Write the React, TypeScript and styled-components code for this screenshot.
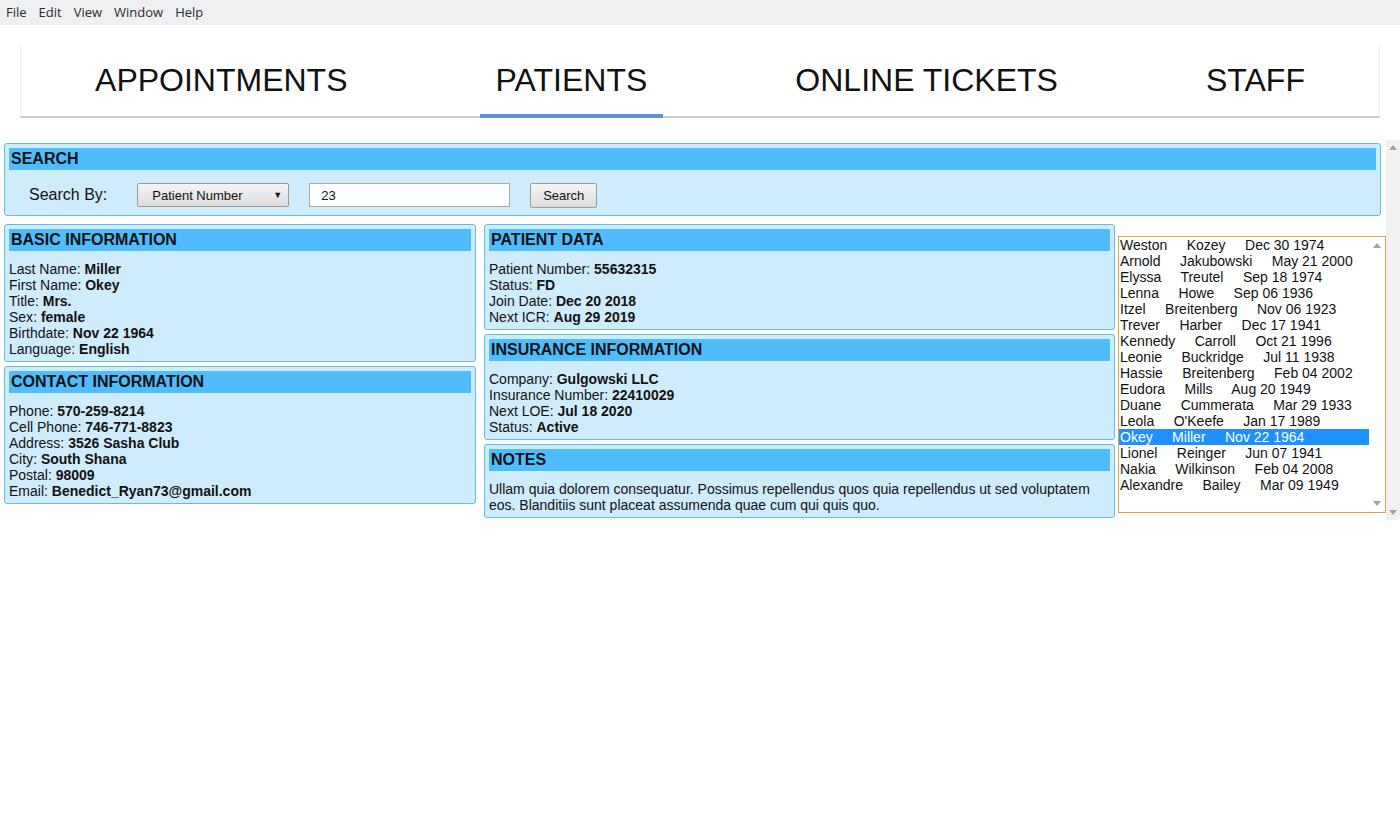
import React from 'react';
import styled, { createGlobalStyle } from 'styled-components';

const GlobalStyle = createGlobalStyle`
  body {
    margin: 0;
    background: #fff;
    color: #111;
    font-family: "Liberation Sans", Arial, sans-serif;
  }
`;

const MenuBar = styled.div`
  display: flex;
  align-items: center;
  height: 25px;
  padding-bottom: 1px;
  box-sizing: border-box;
  background: #eff0f1;
  font-family: "Open Sans", sans-serif;
  font-size: 13px;
  color: #2a2a2a;
`;

const MenuItem = styled.span`
  padding: 0 6px;
`;

const TabBar = styled.nav`
  display: flex;
  justify-content: space-around;
  margin: 20px 20px 0;
  background: #fff;
  border-left: 1px solid #ececec;
  border-right: 1px solid #ececec;
  border-bottom: 2px solid #c8d0da;
`;

const Tab = styled.div<{ $active?: boolean }>`
  box-sizing: border-box;
  height: 73px;
  margin-bottom: -2px;
  padding: 17px 16px 0;
  font-size: 32px;
  line-height: 36px;
  color: #111;
  border-bottom: 4px solid ${(p) => (p.$active ? '#5b8fe0' : 'transparent')};
`;

const ScrollArea = styled.div`
  display: flex;
  height: 380px;
  margin-top: 22px;
`;

const Content = styled.main`
  flex: 1;
  min-width: 0;
  padding: 3px 0 0 4px;
`;

const ScrollTrack = styled.div<{ $bg: string; $width: number; $pad: number }>`
  width: ${(p) => p.$width}px;
  display: flex;
  flex-direction: column;
  justify-content: space-between;
  align-items: center;
  padding: ${(p) => p.$pad}px 0;
  background: ${(p) => p.$bg};
  box-sizing: border-box;
`;

const Panel = styled.section`
  background: #cfecfd;
  border: 1px solid #62bde6;
  border-radius: 3px;
  padding: 4px;
`;

const SearchPanel = styled(Panel)`
  margin-right: 5px;
`;

const PanelTitle = styled.h2`
  margin: 0;
  padding: 0 2px;
  background: #4fbcfe;
  font-size: 16px;
  font-weight: bold;
  line-height: 22px;
`;

const PanelBody = styled.div`
  margin-top: 10px;
  font-size: 14px;
  line-height: 16px;
`;

const SearchRow = styled.div`
  display: flex;
  align-items: center;
  height: 24px;
  margin: 13px 0 4px;
  padding-left: 20px;
`;

const SearchLabel = styled.label`
  font-size: 16px;
  margin-right: 30px;
`;

const SelectBox = styled.div`
  box-sizing: border-box;
  display: flex;
  align-items: center;
  justify-content: space-between;
  width: 152px;
  height: 24px;
  padding: 0 6px 0 14px;
  border: 1px solid #9a9a9a;
  border-radius: 2px;
  background: linear-gradient(#f5f5f5, #dcdcdc);
  font-size: 13px;
`;

const Caret = styled.span`
  font-size: 9px;
`;

const TextInput = styled.input`
  box-sizing: border-box;
  width: 201px;
  height: 24px;
  margin-left: 20px;
  padding: 0 11px;
  border: 1px solid #a9a9a9;
  background: #fff;
  font-family: "Liberation Sans", Arial, sans-serif;
  font-size: 13px;
  color: #111;
`;

const Button = styled.button`
  box-sizing: border-box;
  width: 67px;
  height: 25px;
  margin-left: 20px;
  border: 1px solid #9a9a9a;
  border-radius: 2px;
  background: linear-gradient(#f5f5f5, #dcdcdc);
  font-family: "Liberation Sans", Arial, sans-serif;
  font-size: 13px;
  color: #111;
`;

const Columns = styled.div`
  display: flex;
  align-items: flex-start;
  margin-top: 8px;
`;

const Column = styled.div<{ $width: number; $gap: number }>`
  display: flex;
  flex-direction: column;
  gap: 4px;
  width: ${(p) => p.$width}px;
  margin-right: ${(p) => p.$gap}px;
`;

const ListBox = styled.div`
  flex: 1;
  display: flex;
  box-sizing: border-box;
  height: 277px;
  margin-top: 12px;
  border: 1px solid #d9a54a;
  background: #fff;
`;

const Options = styled.ul`
  flex: 1;
  margin: 0;
  padding: 0;
  list-style: none;
  font-size: 14px;
  line-height: 16px;
`;

const Option = styled.li<{ $selected?: boolean }>`
  padding-left: 1px;
  white-space: pre;
  background: ${(p) => (p.$selected ? '#1e90ff' : 'transparent')};
  color: ${(p) => (p.$selected ? '#fff' : '#111')};
`;

const Arrow = ({ down }: { down?: boolean }) => (
  <svg width="8" height="5" viewBox="0 0 8 5">
    <path d={down ? 'M0 0 L8 0 L4 5 Z' : 'M0 5 L8 5 L4 0 Z'} fill="#a3a3a3" />
  </svg>
);

const Field = ({ label, value }: { label: string; value: string }) => (
  <div>
    {label}: <b>{value}</b>
  </div>
);

const patients = [
  ['Weston', 'Kozey', 'Dec 30 1974'],
  ['Arnold', 'Jakubowski', 'May 21 2000'],
  ['Elyssa', 'Treutel', 'Sep 18 1974'],
  ['Lenna', 'Howe', 'Sep 06 1936'],
  ['Itzel', 'Breitenberg', 'Nov 06 1923'],
  ['Trever', 'Harber', 'Dec 17 1941'],
  ['Kennedy', 'Carroll', 'Oct 21 1996'],
  ['Leonie', 'Buckridge', 'Jul 11 1938'],
  ['Hassie', 'Breitenberg', 'Feb 04 2002'],
  ['Eudora', 'Mills', 'Aug 20 1949'],
  ['Duane', 'Cummerata', 'Mar 29 1933'],
  ['Leola', "O'Keefe", 'Jan 17 1989'],
  ['Okey', 'Miller', 'Nov 22 1964'],
  ['Lionel', 'Reinger', 'Jun 07 1941'],
  ['Nakia', 'Wilkinson', 'Feb 04 2008'],
  ['Alexandre', 'Bailey', 'Mar 09 1949'],
];

const SPACER = '     ';

const App = () => (
  <>
    <GlobalStyle />
    <MenuBar>
      {['File', 'Edit', 'View', 'Window', 'Help'].map((m) => (
        <MenuItem key={m}>{m}</MenuItem>
      ))}
    </MenuBar>

    <TabBar>
      <Tab>APPOINTMENTS</Tab>
      <Tab $active>PATIENTS</Tab>
      <Tab>ONLINE TICKETS</Tab>
      <Tab>STAFF</Tab>
    </TabBar>

    <ScrollArea>
      <Content>
        <SearchPanel>
          <PanelTitle>SEARCH</PanelTitle>
          <SearchRow>
            <SearchLabel>Search By:</SearchLabel>
            <SelectBox>
              Patient Number
              <Caret>▼</Caret>
            </SelectBox>
            <TextInput defaultValue="23" />
            <Button>Search</Button>
          </SearchRow>
        </SearchPanel>

        <Columns>
          <Column $width={472} $gap={8}>
            <Panel>
              <PanelTitle>BASIC INFORMATION</PanelTitle>
              <PanelBody>
                <Field label="Last Name" value="Miller" />
                <Field label="First Name" value="Okey" />
                <Field label="Title" value="Mrs." />
                <Field label="Sex" value="female" />
                <Field label="Birthdate" value="Nov 22 1964" />
                <Field label="Language" value="English" />
              </PanelBody>
            </Panel>
            <Panel>
              <PanelTitle>CONTACT INFORMATION</PanelTitle>
              <PanelBody>
                <Field label="Phone" value="570-259-8214" />
                <Field label="Cell Phone" value="746-771-8823" />
                <Field label="Address" value="3526 Sasha Club" />
                <Field label="City" value="South Shana" />
                <Field label="Postal" value="98009" />
                <Field label="Email" value="Benedict_Ryan73@gmail.com" />
              </PanelBody>
            </Panel>
          </Column>

          <Column $width={631} $gap={3}>
            <Panel>
              <PanelTitle>PATIENT DATA</PanelTitle>
              <PanelBody>
                <Field label="Patient Number" value="55632315" />
                <Field label="Status" value="FD" />
                <Field label="Join Date" value="Dec 20 2018" />
                <Field label="Next ICR" value="Aug 29 2019" />
              </PanelBody>
            </Panel>
            <Panel>
              <PanelTitle>INSURANCE INFORMATION</PanelTitle>
              <PanelBody>
                <Field label="Company" value="Gulgowski LLC" />
                <Field label="Insurance Number" value="22410029" />
                <Field label="Next LOE" value="Jul 18 2020" />
                <Field label="Status" value="Active" />
              </PanelBody>
            </Panel>
            <Panel>
              <PanelTitle>NOTES</PanelTitle>
              <PanelBody>
                Ullam quia dolorem consequatur. Possimus repellendus quos quia repellendus ut sed
                voluptatem eos. Blanditiis sunt placeat assumenda quae cum qui quis quo.
              </PanelBody>
            </Panel>
          </Column>

          <ListBox>
            <Options>
              {patients.map(([first, last, date]) => (
                <Option key={first + last} $selected={first === 'Okey'}>
                  {first + SPACER + last + SPACER + date}
                </Option>
              ))}
            </Options>
            <ScrollTrack $bg="#fff" $width={16} $pad={6}>
              <Arrow />
              <Arrow down />
            </ScrollTrack>
          </ListBox>
        </Columns>
      </Content>

      <ScrollTrack $bg="#f1f1f1" $width={14} $pad={5}>
        <Arrow />
        <Arrow down />
      </ScrollTrack>
    </ScrollArea>
  </>
);

export default App;
